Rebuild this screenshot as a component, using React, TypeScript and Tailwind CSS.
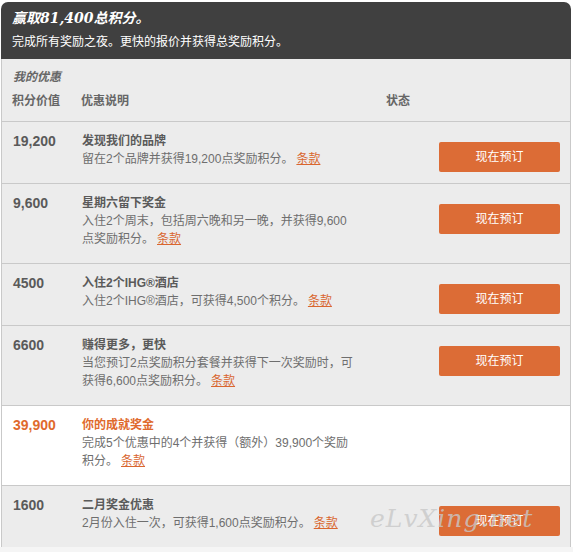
import type { ReactNode } from 'react'

type Offer = {
  value: string
  title: string
  lines: string[]
  highlight?: boolean
  button?: boolean
}

const offers: Offer[] = [
  { value: '19,200', title: '发现我们的品牌', lines: ['留在2个品牌并获得19,200点奖励积分。'], button: true },
  {
    value: '9,600',
    title: '星期六留下奖金',
    lines: ['入住2个周末，包括周六晚和另一晚，并获得9,600', '点奖励积分。'],
    button: true,
  },
  { value: '4500', title: '入住2个IHG®酒店', lines: ['入住2个IHG®酒店，可获得4,500个积分。'], button: true },
  {
    value: '6600',
    title: '赚得更多，更快',
    lines: ['当您预订2点奖励积分套餐并获得下一次奖励时，可', '获得6,600点奖励积分。'],
    button: true,
  },
  {
    value: '39,900',
    title: '你的成就奖金',
    lines: ['完成5个优惠中的4个并获得（额外）39,900个奖励', '积分。'],
    highlight: true,
  },
  { value: '1600', title: '二月奖金优惠', lines: ['2月份入住一次，可获得1,600点奖励积分。'], button: true },
]

function Terms() {
  return <a className="ml-[3px] cursor-pointer text-[#d9662f] underline">条款</a>
}

function Row({ offer }: { offer: Offer }) {
  const accent = offer.highlight ? 'text-[#df6a2d]' : 'text-[#5a5a5a]'
  const lines: ReactNode[] = offer.lines.map((line, i) => (
    <div key={i} className="whitespace-nowrap">
      {line}
      {i === offer.lines.length - 1 && <Terms />}
    </div>
  ))

  return (
    <div className={`flex border-t border-[#c9c9c9] ${offer.highlight ? 'bg-white' : 'bg-[#ececec]'}`}>
      <div className={`w-[75px] shrink-0 pl-[11px] pt-[10px] text-[14px] font-bold leading-[18px] ${accent}`}>
        {offer.value}
      </div>
      <div className="w-[285px] shrink-0 pl-[5px] pt-[10px] pb-[15px] text-[12px] leading-[18px]">
        <div className={`font-bold ${accent}`}>{offer.title}</div>
        <div className="text-[#6e6e6e]">{lines}</div>
      </div>
      <div className="flex flex-1 justify-end pt-[20px] pr-[10px]">
        {offer.button && (
          <button className="h-[30px] w-[121px] rounded-[2px] bg-[#dc6c36] text-[12px] text-white">
            现在预订
          </button>
        )}
      </div>
    </div>
  )
}

export default function App() {
  return (
    <div className="relative min-h-[552px] bg-white pt-[2px] font-['Liberation_Sans','Noto_Sans_CJK_SC',sans-serif]">
      <div className="ml-[1px] w-[570px]">
        <div className="rounded-t-[7px] bg-[#404040] pl-[11px] pt-[6px] pb-[8px] text-white">
          <div className="font-['DejaVu_Serif','Noto_Sans_CJK_SC',serif] text-[14px] font-bold italic leading-[20px]">
            赢取81,400总积分。
          </div>
          <div className="mt-[5px] text-[12px] leading-[18px]">完成所有奖励之夜。更快的报价并获得总奖励积分。</div>
        </div>

        <div className="border-x border-[#c9c9c9]">
          <div className="bg-[#ececec] pt-[9px] pb-[11px] text-[12px] leading-[18px]">
            <div className="pl-[11px] font-['DejaVu_Serif','Noto_Sans_CJK_SC',serif] font-bold italic text-[#666]">
              我的优惠
            </div>
            <div className="mt-[6px] flex font-bold text-[#666]">
              <div className="w-[75px] pl-[10px]">积分价值</div>
              <div className="w-[285px] pl-[4px]">优惠说明</div>
              <div className="pl-[24px]">状态</div>
            </div>
          </div>

          {offers.map((offer) => (
            <Row key={offer.value} offer={offer} />
          ))}
        </div>
      </div>
      <div className="h-[10px] bg-[#f5f5f5]" />

      <div className="pointer-events-none absolute left-[370px] top-[506px] font-['DejaVu_Serif',serif] text-[25px] italic leading-none tracking-[1px] text-[#c8c8c8]/80">
        eLvXing.net
      </div>
    </div>
  )
}
